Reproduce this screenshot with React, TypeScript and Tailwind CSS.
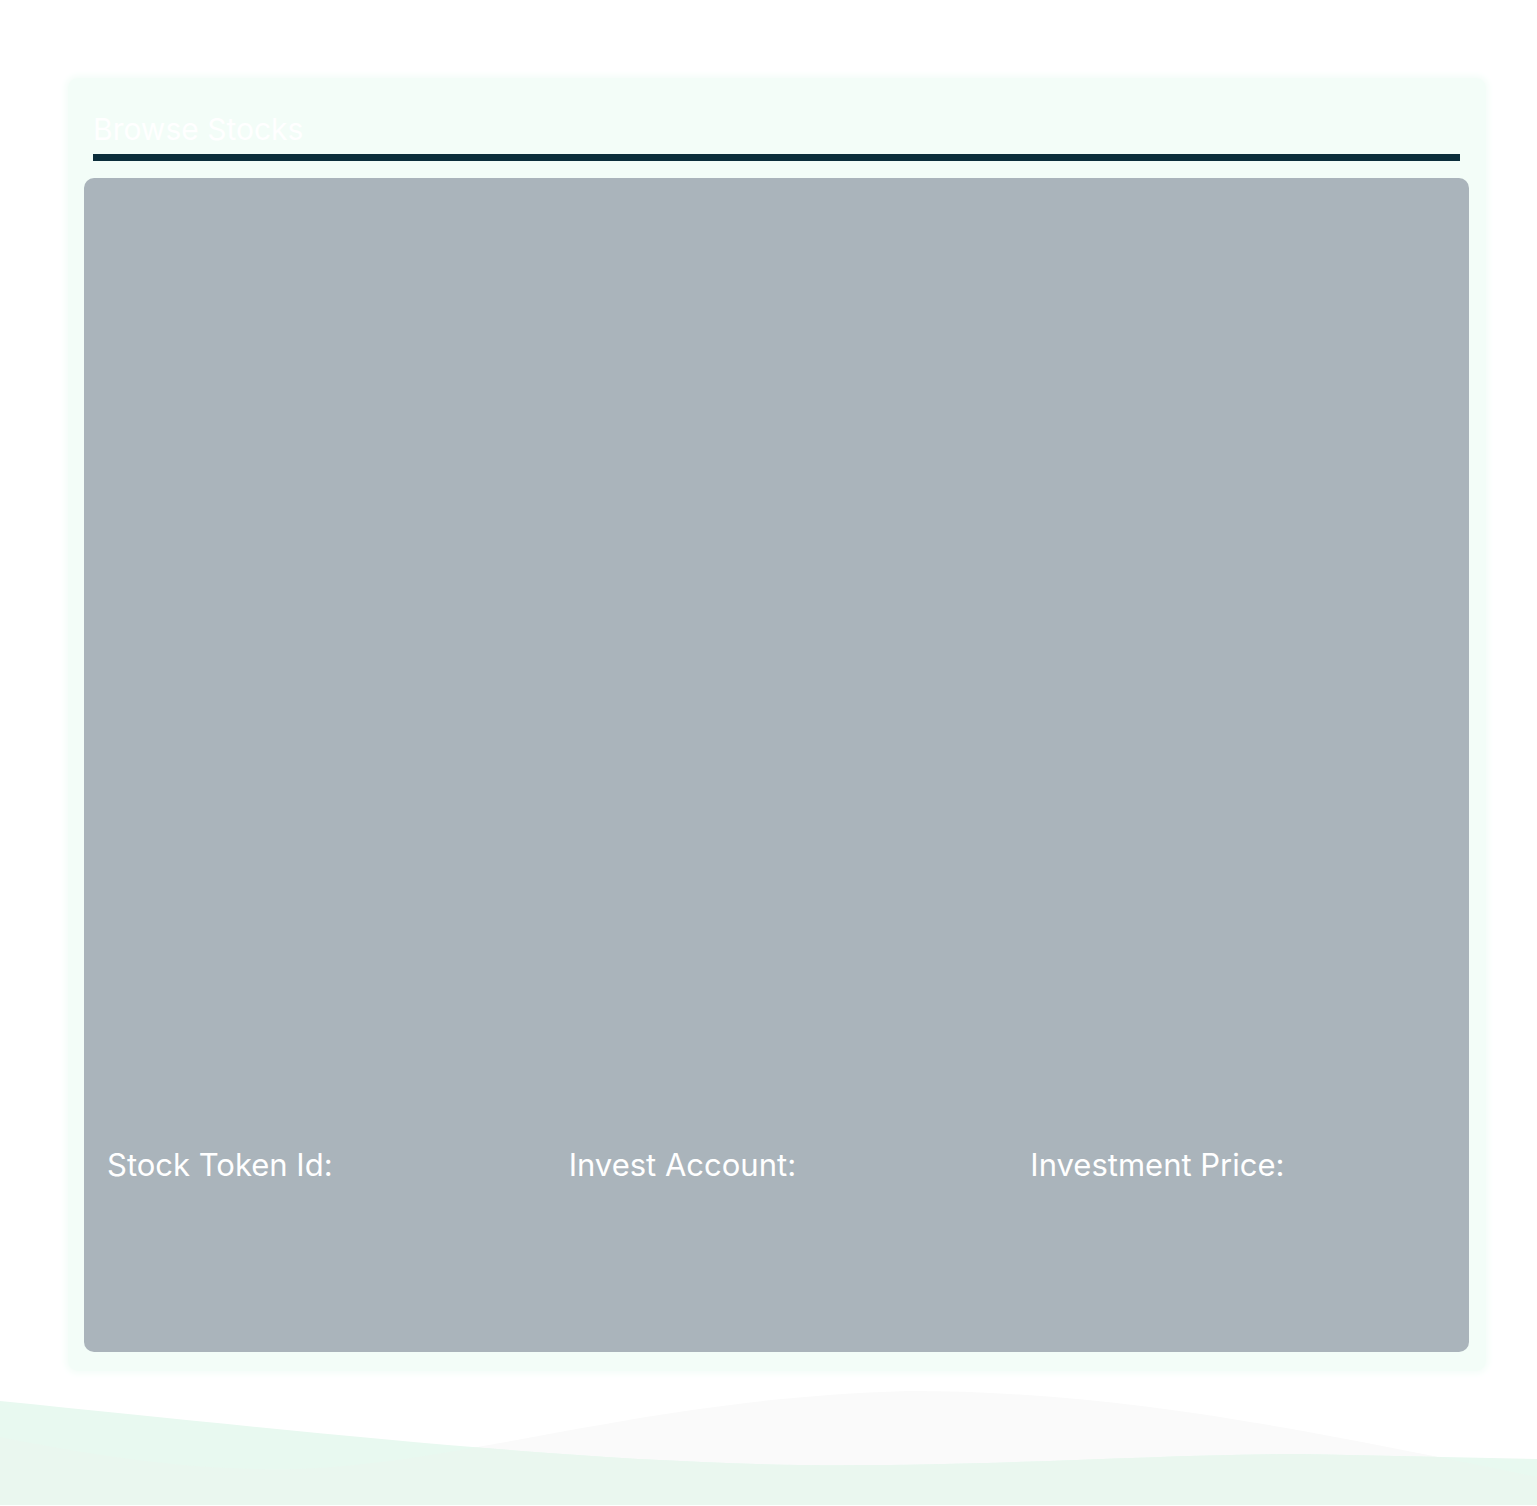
export default function App() {
  const labels = ['Stock Token Id:', 'Invest Account:', 'Investment Price:']

  return (
    <div className="min-h-[1506px] w-full bg-white font-['Inter','Noto_Sans',sans-serif]">
      {/* Browse card */}
      <div className="ml-[68px] pt-[78px]">
        <div className="w-[1418px] rounded-[10px] bg-[#f3fdf8] pb-[19px] pl-[16px] pr-[17px] pt-[33px] shadow-[0_0_6px_3px_#f5fdf9]">
          <div className="px-[9px]">
            <h2 className="text-[30px] leading-[36px] font-normal text-white">Browse Stocks</h2>
            <div className="mt-[7px] h-[7px] bg-[#0b2e3b]" />
          </div>

          <div className="mt-[17px] flex h-[1174px] flex-col rounded-[10px] bg-[#aab4bb]">
            <div className="h-[968px]" />
            <div className="grid grid-cols-3">
              {labels.map((l) => (
                <div key={l} className="pl-[23px]">
                  <p className="text-[31px] leading-[37px] text-white">{l}</p>
                </div>
              ))}
            </div>
          </div>
        </div>
      </div>

      {/* Bottom waves */}
      <svg className="mt-[8px] block h-[126px] w-full" viewBox="0 1380 1537 126" preserveAspectRatio="none">
        <defs>
          <clipPath id="hill">
            <path d="M0,1438 C120,1462 210,1472 300,1470 C480,1462 640,1400 908,1392 C1120,1392 1300,1430 1537,1478 L1537,1506 L0,1506 Z" />
          </clipPath>
        </defs>
        <path
          d="M0,1438 C120,1462 210,1472 300,1470 C480,1462 640,1400 908,1392 C1120,1392 1300,1430 1537,1478 L1537,1506 L0,1506 Z"
          fill="#fafafa"
        />
        <path
          d="M0,1402 C300,1432 560,1462 800,1466 C1000,1468 1150,1455 1300,1455 L1537,1460 L1537,1506 L0,1506 Z"
          fill="#e8f9f0"
        />
        <path
          d="M0,1402 C300,1432 560,1462 800,1466 C1000,1468 1150,1455 1300,1455 L1537,1460 L1537,1506 L0,1506 Z"
          fill="#eaf7ef"
          clipPath="url(#hill)"
        />
      </svg>
    </div>
  )
}
